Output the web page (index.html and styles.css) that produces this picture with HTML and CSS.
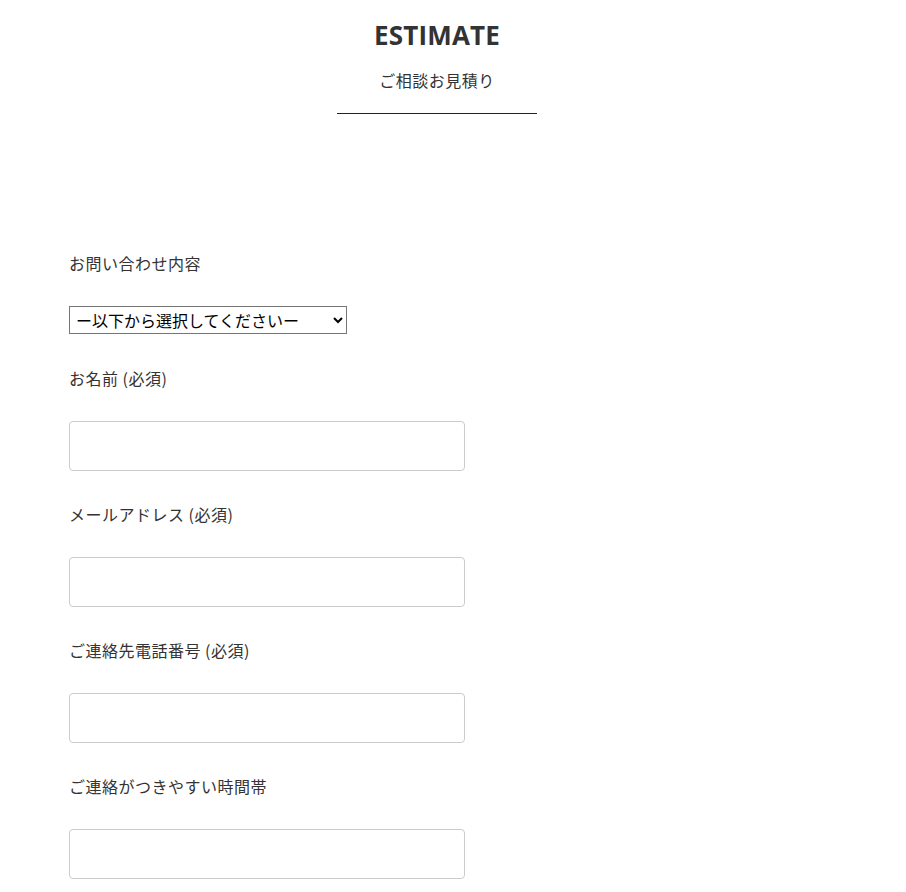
FILE: index.html
```html
<!DOCTYPE html>
<html lang="ja">
<head>
<meta charset="utf-8">
<title>ESTIMATE</title>
<link rel="stylesheet" href="styles.css">
</head>
<body>
<div class="container">
  <header class="head">
    <h2 class="title">ESTIMATE</h2>
    <p class="subtitle">ご相談お見積り</p>
    <div class="rule"></div>
  </header>
  <form class="form">
    <div class="field">
      <label class="label">お問い合わせ内容</label>
      <select class="select">
        <option>ー以下から選択してくださいー</option>
      </select>
    </div>
    <div class="field">
      <label class="label">お名前 (必須)</label>
      <input class="input" type="text">
    </div>
    <div class="field">
      <label class="label">メールアドレス (必須)</label>
      <input class="input" type="email">
    </div>
    <div class="field">
      <label class="label">ご連絡先電話番号 (必須)</label>
      <input class="input" type="tel">
    </div>
    <div class="field">
      <label class="label">ご連絡がつきやすい時間帯</label>
      <input class="input" type="text">
    </div>
  </form>
</div>
</body>
</html>
```

FILE: styles.css
```css
html, body {
  margin: 0;
  padding: 0;
  background: #fff;
}
body {
  font-family: "Noto Sans CJK JP", "Noto Sans", sans-serif;
  color: #333;
  font-size: 16px;
}
.container {
  width: 736px;
  margin-left: 69px;
}
.head {
  display: flex;
  flex-direction: column;
  align-items: center;
  padding-top: 17px;
}
.title {
  margin: 0;
  font-family: "Open Sans", sans-serif;
  font-weight: 700;
  font-size: 26px;
  line-height: 36px;
  letter-spacing: 0.2px;
  color: #333;
}
.subtitle {
  margin: 15px 0 0;
  font-size: 16px;
  line-height: 24px;
  letter-spacing: 0.5px;
}
.rule {
  width: 200px;
  height: 1px;
  background: #222;
  margin-top: 21px;
}
.form {
  padding-top: 137px;
}
.field {
  display: flex;
  flex-direction: column;
  align-items: flex-start;
}
.label {
  font-size: 16px;
  line-height: 24px;
  letter-spacing: 0.5px;
  margin-bottom: 31px;
}
.select {
  width: 278px;
  height: 28px;
  font-family: "Noto Sans CJK JP", sans-serif;
  font-size: 16px;
  color: #000;
  border: 1px solid #767676;
  border-radius: 0;
  background: #fff;
  margin-bottom: 32px;
  padding: 0 2px;
}
.input {
  box-sizing: border-box;
  width: 396px;
  height: 50px;
  border: 1px solid #ccc;
  border-radius: 4px;
  margin-bottom: 31px;
  padding: 0 12px;
  font-size: 16px;
}
```
